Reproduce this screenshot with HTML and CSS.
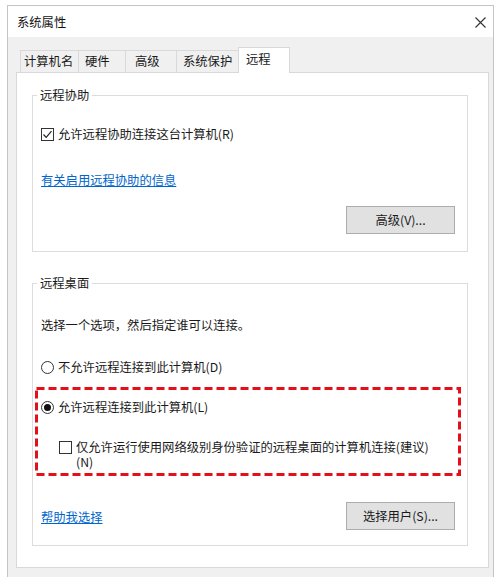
FILE: index.html
```html
<!DOCTYPE html>
<html lang="zh-CN">
<head>
<meta charset="utf-8">
<title>系统属性</title>
<link rel="stylesheet" href="styles.css">
</head>
<body>
<div class="window">
  <div class="titlebar">
    <span class="title">系统属性</span>
    <svg class="close" width="11" height="11" viewBox="0 0 11 11"><path d="M0.5 0.5 L10.5 10.5 M10.5 0.5 L0.5 10.5" stroke="#333" stroke-width="1.1" fill="none"/></svg>
  </div>
  <div class="client">
    <div class="tabs">
      <div class="tab t1">计算机名</div>
      <div class="tab t2">硬件</div>
      <div class="tab t3">高级</div>
      <div class="tab t4">系统保护</div>
      <div class="tab active t5">远程</div>
    </div>
    <div class="panel">
      <fieldset class="group g1">
        <legend>远程协助</legend>
        <div class="row first">
          <span class="checkbox checked"><svg width="13" height="13" viewBox="0 0 13 13"><polyline points="2.5,6.5 5.2,9.3 10.5,3.2" fill="none" stroke="#222" stroke-width="1.2"/></svg></span>
          <span>允许远程协助连接这台计算机(R)</span>
        </div>
        <a class="link info" href="#">有关启用远程协助的信息</a>
        <div class="btnrow">
          <button class="btn">高级(V)...</button>
        </div>
      </fieldset>
      <fieldset class="group g2">
        <legend>远程桌面</legend>
        <div class="desc">选择一个选项，然后指定谁可以连接。</div>
        <div class="row radio-row">
          <span class="radio"></span>
          <span>不允许远程连接到此计算机(D)</span>
        </div>
        <div class="highlight">
          <svg class="dash" aria-hidden="true"><rect class="dashrect"/></svg>
          <div class="row">
            <span class="radio on"></span>
            <span>允许远程连接到此计算机(L)</span>
          </div>
          <div class="row sub">
            <span class="checkbox"></span>
            <span class="wrap">仅允许运行使用网络级别身份验证的远程桌面的计算机连接(建议)(N)</span>
          </div>
        </div>
        <div class="bottomrow">
          <a class="link" href="#">帮助我选择</a>
          <button class="btn">选择用户(S)...</button>
        </div>
      </fieldset>
    </div>
  </div>
</div>
</body>
</html>
```
FILE: styles.css
```css
html, body {
  margin: 0;
  padding: 0;
  background: #ffffff;
  overflow: hidden;
}
body {
  font-family: "Noto Sans CJK SC", "Microsoft YaHei", sans-serif;
  font-size: 12.3px;
  line-height: 17px;
  color: #1a1a1a;
}
.window {
  margin: 5px 0 0 7px;
  width: 485px;
  height: 571px;
  border: 1px solid #c4c4c4;
  border-bottom: none;
  background: #f0f0f0;
  overflow: hidden;
}
.titlebar {
  height: 31px;
  background: #ffffff;
  display: flex;
  align-items: center;
  justify-content: space-between;
  padding: 0 7px 0 9px;
}
.title {
  color: #111;
  margin-top: 1px;
}
.close {
  display: block;
  margin-top: 1px;
}
.client {
  padding: 10px 4px 0 8px;
}
.tabs {
  display: flex;
  align-items: flex-end;
  height: 26px;
  margin-left: 4px;
}
.tab {
  height: 22px;
  line-height: 21px;
  border: 1px solid #d9d9d9;
  border-bottom: none;
  margin-left: -1px;
  margin-bottom: 1px;
  background: #f0f0f0;
  padding-left: 4px;
  box-sizing: border-box;
  color: #1a1a1a;
}
.tab:first-child { margin-left: 0; padding-left: 3px; }
.t1 { width: 59px; }
.t2 { width: 48px; padding-left: 6px; }
.t3 { width: 52px; padding-left: 9px; }
.t4 { width: 63px; padding-left: 6px; }
.tab.active {
  position: relative;
  z-index: 1;
  background: #ffffff;
  height: 26px;
  line-height: 22px;
  width: 52px;
  padding-left: 7px;
  margin-bottom: 0;
  border-color: #d9d9d9;
}
.panel {
  margin-top: -1px;
  border: 1px solid #d9d9d9;
  background: #ffffff;
  padding: 14px 20px 21px 15px;
}
.group {
  margin: 0;
  border: 1px solid #dcdcdc;
  padding: 0 12px 17px 8px;
  min-width: 0;
}
.group legend {
  padding: 0 3px;
  margin-left: -4px;
  line-height: 17px;
  color: #1a1a1a;
}
.g2 {
  margin-top: 23px;
  padding-bottom: 15px;
}
.row {
  display: flex;
  align-items: center;
  gap: 4px;
}
.row.first { margin-top: 22px; }
.checkbox {
  width: 13px;
  height: 13px;
  box-sizing: border-box;
  border: 1px solid #333;
  background: #fff;
  flex: none;
  display: flex;
}
.checkbox svg { margin: -1px; display: block; }
.radio {
  width: 13px;
  height: 13px;
  box-sizing: border-box;
  border: 1px solid #333;
  border-radius: 50%;
  background: #fff;
  flex: none;
  display: flex;
  align-items: center;
  justify-content: center;
}
.radio.on::after {
  content: "";
  width: 7px;
  height: 7px;
  border-radius: 50%;
  background: #111;
}
.link {
  display: block;
  color: #0066cc;
  text-decoration: underline;
  width: max-content;
}
.info { margin-top: 29px; }
.btnrow {
  display: flex;
  justify-content: flex-end;
  margin-top: 17px;
}
.btn {
  width: 109px;
  height: 28px;
  background: #e1e1e1;
  border: 1px solid #adadad;
  font-family: inherit;
  font-size: 12.3px;
  color: #1a1a1a;
  padding: 0;
  margin: 0;
}
.desc { margin-top: 25px; }
.radio-row { margin-top: 25px; }
.highlight {
  position: relative;
  margin: 11px -6px 0 -6px;
  padding: 12px 6px 6px 6px;
}
.dash {
  position: absolute;
  left: 0;
  top: 0;
  width: 100%;
  height: 100%;
  overflow: visible;
}
.dashrect {
  x: 1.5px;
  y: 1.5px;
  width: calc(100% - 3px);
  height: calc(100% - 3px);
  fill: none;
  stroke: #e3101a;
  stroke-width: 3;
  stroke-dasharray: 8 4;
}
.row.sub {
  margin-top: 24px;
  margin-left: 18px;
  align-items: flex-start;
  line-height: 15px;
  gap: 4px;
}
.row.sub .checkbox { margin-top: 1px; }
.wrap {
  max-width: 358px;
}
.bottomrow {
  display: flex;
  justify-content: space-between;
  align-items: center;
  margin-top: 26px;
}
.bottomrow .link { margin-top: 2px; }
```
